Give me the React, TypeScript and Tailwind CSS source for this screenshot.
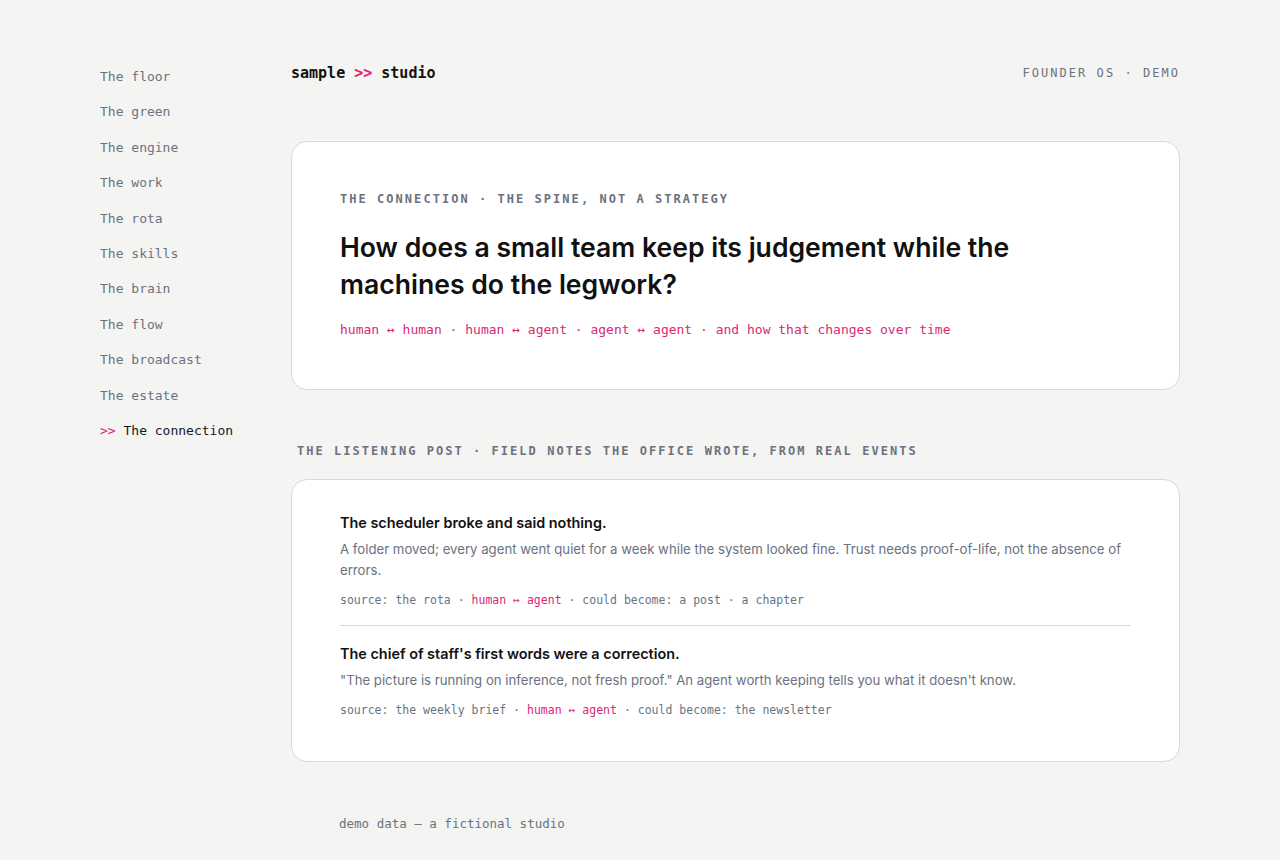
import React from "react";

const mono = "font-['DejaVu_Sans_Mono',monospace]";
const sans = "font-['Inter',sans-serif]";

const navItems = [
  "The floor",
  "The green",
  "The engine",
  "The work",
  "The rota",
  "The skills",
  "The brain",
  "The flow",
  "The broadcast",
  "The estate",
  "The connection",
];

const notes = [
  {
    title: "The scheduler broke and said nothing.",
    body: "A folder moved; every agent went quiet for a week while the system looked fine. Trust needs proof-of-life, not the absence of errors.",
    source: "the rota",
    link: "human ↔ agent",
    become: "a post · a chapter",
  },
  {
    title: "The chief of staff's first words were a correction.",
    body: "\"The picture is running on inference, not fresh proof.\" An agent worth keeping tells you what it doesn't know.",
    source: "the weekly brief",
    link: "human ↔ agent",
    become: "the newsletter",
  },
];

const App: React.FC = () => {
  const active = "The connection";

  return (
    <div className="min-h-screen bg-[#f4f4f2]">
      <div className="max-w-[1080px] mx-auto flex pt-[63px] pb-10">
        {/* Sidebar */}
        <nav className={`${mono} w-[191px] shrink-0 pt-1 flex flex-col gap-[15.4px] text-[13px] leading-5`}>
          {navItems.map((item) =>
            item === active ? (
              <div key={item} className="text-[#111827]">
                <span className="text-[#db2777]">&gt;&gt;</span> {item}
              </div>
            ) : (
              <div key={item} className="text-[#6b7280]">
                {item}
              </div>
            )
          )}
        </nav>

        {/* Main */}
        <main className="flex-1 min-w-0">
          <header className="flex items-center justify-between h-5 mb-[58px]">
            <div className={`${mono} text-[15px] font-bold text-[#111]`}>
              sample <span className="text-[#db2777]">&gt;&gt;</span> studio
            </div>
            <div className={`${mono} text-[12px] tracking-[0.17em] text-[#6b7280]`}>
              FOUNDER OS · DEMO
            </div>
          </header>

          {/* The connection card */}
          <section className="bg-white border border-[#d9d9dd] rounded-2xl px-12 pt-[49px] pb-[49px]">
            <div className={`${mono} text-[12px] leading-4 font-bold tracking-[0.17em] text-[#6b7280]`}>
              THE CONNECTION · THE SPINE, NOT A STRATEGY
            </div>
            <h1 className={`${sans} mt-[22px] text-[26.6px] leading-[37px] font-semibold text-[#111] max-w-[700px]`}>
              How does a small team keep its judgement while the machines do the legwork?
            </h1>
            <p className={`${mono} mt-[17px] text-[13px] leading-5 text-[#db2777]`}>
              human ↔ human · human ↔ agent · agent ↔ agent · and how that changes over time
            </p>
          </section>

          {/* Listening post */}
          <div className={`${mono} mt-[53px] mb-[20px] pl-1.5 text-[12px] leading-4 font-bold tracking-[0.17em] text-[#6b7280]`}>
            THE LISTENING POST · FIELD NOTES THE OFFICE WROTE, FROM REAL EVENTS
          </div>

          <section className="bg-white border border-[#d9d9dd] rounded-2xl px-12 pt-[33px] pb-[43px]">
            {notes.map((note, i) => (
              <div key={note.title}>
                {i > 0 && <div className="border-t border-[#d9d9dd] mt-[17px] mb-[18px]" />}
                <h3 className={`${sans} text-[14.4px] leading-5 font-semibold text-[#111]`}>{note.title}</h3>
                <p className={`${sans} mt-[6px] text-[13.2px] leading-[21px] text-[#6b7280]`}>{note.body}</p>
                <p className={`${mono} mt-[11px] text-[11.5px] leading-4 text-[#6b7280]`}>
                  source: {note.source} · <span className="text-[#db2777]">{note.link}</span> · could become:{" "}
                  {note.become}
                </p>
              </div>
            ))}
          </section>

          <footer className={`${mono} mt-[53px] pl-12 text-[12.5px] leading-[18px] text-[#6b7280]`}>
            demo data — a fictional studio
          </footer>
        </main>
      </div>
    </div>
  );
};

export default App;
